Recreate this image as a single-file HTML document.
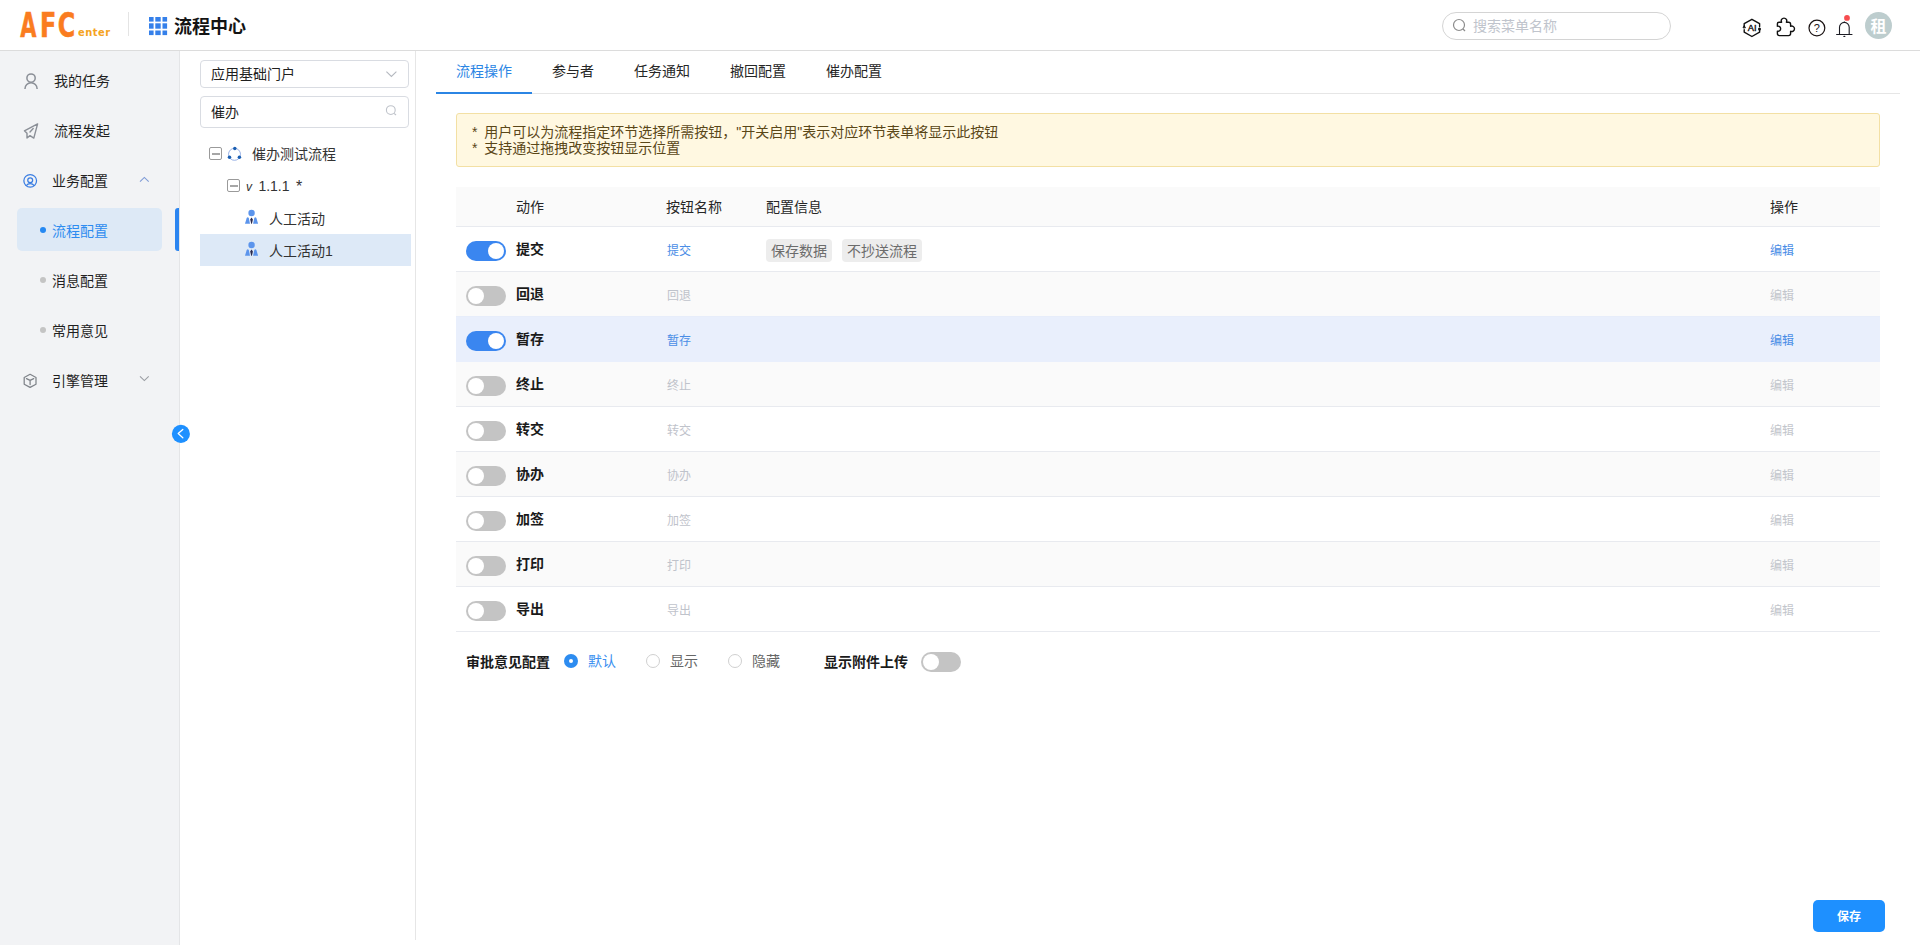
<!DOCTYPE html>
<html lang="zh-CN">
<head>
<meta charset="utf-8">
<title>流程中心</title>
<style>
*{box-sizing:border-box;margin:0;padding:0}
html,body{width:1920px;height:945px;overflow:hidden;background:#fff}
body{font-family:"Liberation Sans","Noto Sans CJK SC",sans-serif;font-size:14px;color:#1f1f1f;position:relative}
.abs{position:absolute}
.t{position:absolute;white-space:nowrap;line-height:20px;height:20px}
/* header */
#hdr{position:absolute;left:0;top:0;width:1920px;height:51px;background:#fff;border-bottom:1px solid #dcdcdc}
#logo{position:absolute;left:20px;top:5px;height:40px;line-height:40px;font-family:"DejaVu Sans","Liberation Sans",sans-serif;font-weight:bold;font-size:34px;color:#fa7c20;transform:scaleX(0.7);transform-origin:0 50%;letter-spacing:2.2px;-webkit-text-stroke:0.6px #fa7c20}
#logo2{position:absolute;left:78px;top:26px;font-family:"DejaVu Sans","Liberation Sans",sans-serif;font-weight:bold;font-size:11px;line-height:14px;color:#f5a322;letter-spacing:0.55px;transform:scaleX(0.9);transform-origin:0 50%}
#hdiv{position:absolute;left:128px;top:12px;width:1px;height:24px;background:#e4e4e4}
#title{position:absolute;left:174px;top:14px;font-size:18px;line-height:26px;font-weight:bold;color:#141414}
#search{position:absolute;left:1442px;top:12px;width:229px;height:28px;border:1px solid #d4d4d4;border-radius:14px;background:#fff}
#search span{position:absolute;left:30px;top:3px;font-size:14px;line-height:20px;color:#c0c4cc}
#avatar{position:absolute;left:1865px;top:12px;width:27px;height:27px;border-radius:50%;background:#bdcdce;color:#fff;font-size:16px;font-weight:bold;text-align:center;line-height:30px}
/* sidebar */
#side{position:absolute;left:0;top:51px;width:180px;height:894px;background:#f2f3f5;border-right:1px solid #e4e5e7}
.mi{position:absolute;left:54px;font-size:14px;line-height:20px;color:#1f1f1f;white-space:nowrap}
#act{position:absolute;left:17px;top:208px;width:145px;height:43px;border-radius:5px;background:#dde9f6}
#bar{position:absolute;left:175px;top:208px;width:4px;height:43px;background:#2b85f0;border-radius:3px 0 0 3px}
.dot{position:absolute;width:6px;height:6px;border-radius:50%;background:#c4c4c4}
/* tree panel */
#tree{position:absolute;left:180px;top:51px;width:236px;height:889px;background:#fff;border-right:1px solid #e6e6e6}
.inp{position:absolute;left:200px;width:209px;border:1px solid #d9dce2;border-radius:4px;background:#fff}
.inp span{position:absolute;left:10px;font-size:14px;line-height:20px;color:#1f1f1f}
.tn{position:absolute;font-size:14px;line-height:20px;color:#333;white-space:nowrap}
.box{position:absolute;width:13px;height:13px;border:1px solid #9a9a9a;border-radius:2px;background:#fff}
.box:after{content:"";position:absolute;left:1.5px;top:5px;width:8px;height:1.6px;background:#a6a6a6}
#tsel{position:absolute;left:200px;top:234px;width:211px;height:32px;background:#dde9f7}
/* main */
.tab{position:absolute;top:61px;font-size:14px;line-height:20px;color:#262626;white-space:nowrap}
#tabline{position:absolute;left:436px;top:93px;width:1464px;height:1px;background:#e6e6e6}
#tabink{position:absolute;left:436px;top:92px;width:96px;height:2px;background:#2b85e4}
#notice{position:absolute;left:456px;top:113px;width:1424px;height:54px;background:#fff8e1;border:1px solid #f3e0a4;border-radius:3px;font-size:14px;line-height:16px;color:#5a4718;padding:10px 0 0 15px;white-space:nowrap;word-spacing:3px}
#th{position:absolute;left:456px;top:187px;width:1424px;height:40px;background:#fafafa;border-bottom:1px solid #e8eaef}
.th{position:absolute;top:197px;font-size:14px;line-height:20px;color:#262626;white-space:nowrap}
.row{position:absolute;left:456px;width:1424px;height:45px;border-bottom:1px solid #e8eaef;background:#fff}
.row.alt{background:#fafafa}
.row.hl{background:#e9effc;border-bottom-color:#e9effc;box-shadow:0 -1px 0 #e7edfa}
.row b{position:absolute;left:60px;top:12px;font-size:14px;line-height:20px;color:#1a1a1a;font-weight:bold;white-space:nowrap}
.row i{position:absolute;left:211px;top:15px;font-style:normal;font-size:12px;line-height:18px;color:#bfc3cb;white-space:nowrap}
.row i.on{color:#4a8de6}
.row u{position:absolute;left:1314px;top:15px;text-decoration:none;font-size:12px;line-height:18px;color:#c3c6cc;white-space:nowrap}
.row u.on{color:#4a8de6}
.sw{position:absolute;left:10px;top:14px;width:40px;height:20px;border-radius:10px;background:#c4c4c4}
.sw:after{content:"";position:absolute;left:2px;top:2px;width:16px;height:16px;border-radius:50%;background:#fff}
.sw.on{background:#3a86f0}
.sw.on:after{left:22px}
.tag{position:absolute;top:12px;height:23px;border-radius:4px;background:#ededed;color:#6b6b6b;font-size:14px;line-height:25px;padding:0 5px;white-space:nowrap;overflow:hidden}
.radio{position:absolute;top:654px;width:14px;height:14px;border-radius:50%;border:1px solid #d0d0d0;background:#fff}
.radio.on{border:none;background:#2d8cf0}
.radio.on:after{content:"";position:absolute;left:5px;top:5px;width:4px;height:4px;border-radius:50%;background:#fff}
#save{position:absolute;left:1813px;top:900px;width:72px;height:32px;border-radius:5px;background:#1e90ff;color:#fff;font-size:12px;line-height:35px;overflow:hidden;text-align:center;font-weight:bold}
</style>
</head>
<body>
<!-- HEADER -->
<div id="hdr">
  <div id="logo"><span style="display:inline-block;transform:scaleX(0.88);transform-origin:15% 50%">A</span>FC</div>
  <div id="logo2">enter</div>
  <div id="hdiv"></div>
  <svg class="abs" style="left:149px;top:17px" width="19" height="19" viewBox="0 0 19 19"><g fill="#3580ea"><rect x="0" y="0" width="4.6" height="4.6"/><rect x="6.3" y="0" width="5.4" height="4.6"/><rect x="13.5" y="0" width="4.6" height="4.6"/><rect x="0" y="6.3" width="4.6" height="5.4"/><rect x="6.3" y="6.3" width="5.4" height="5.4"/><rect x="13.5" y="6.3" width="4.6" height="5.4"/><rect x="0" y="13.5" width="4.6" height="4.6"/><rect x="6.3" y="13.5" width="5.4" height="4.6"/><rect x="13.5" y="13.5" width="4.6" height="4.6"/></g></svg>
  <div id="title">流程中心</div>
  <div id="search">
    <svg class="abs" style="left:9px;top:5px" width="16" height="16" viewBox="0 0 16 16"><circle cx="7" cy="7" r="5.5" fill="none" stroke="#8c8c8c" stroke-width="1.2"/><path d="M11 11l2 2" stroke="#8c8c8c" stroke-width="1.2" fill="none"/></svg>
    <span>搜索菜单名称</span>
  </div>
  <svg class="abs" style="left:1740px;top:16px" width="24" height="24" viewBox="1740 16 24 24" fill="none" stroke="#111" stroke-width="1.4" stroke-linejoin="round" stroke-linecap="round">
    <path d="M1744.2 26.2V23.7L1751.9 19.3L1759.6 23.7V26.6"/>
    <path d="M1759.6 30.2V32.2L1751.9 36.5L1744.2 32.2V29.8"/>
    <path d="M1743.2 27.5L1744.2 25.7L1745.2 27.5Z" fill="#111" stroke-width="1"/>
    <circle cx="1759.5" cy="29.1" r="1.5" fill="#111" stroke="none"/>
    <text x="1752.1" y="31.3" font-family="Liberation Sans, sans-serif" font-size="9.3" text-anchor="middle" fill="#111" stroke="#111" stroke-width="0.4">AI</text>
  </svg>
  <svg class="abs" style="left:1774px;top:14px" width="24" height="24" viewBox="1774 14 24 24" fill="none" stroke="#111" stroke-width="1.4" stroke-linejoin="round" stroke-linecap="round">
    <path d="M1779 22.2H1781.6A2.75 2.75 0 1 1 1786.4 22.2H1788.6Q1790.6 22.2 1790.6 24.2V26.3A2.75 2.75 0 1 1 1790.6 31.3V33.6Q1790.6 35.6 1788.6 35.6H1779.4Q1777.4 35.6 1777.4 33.6V31.1A2.55 2.55 0 1 0 1777.4 26.2V23.8Q1777.4 22.2 1779 22.2Z"/>
  </svg>
  <svg class="abs" style="left:1806px;top:17px" width="22" height="22" viewBox="1806 17 22 22">
    <circle cx="1816.9" cy="28.05" r="7.9" fill="none" stroke="#1a1212" stroke-width="1.2"/>
    <text x="1816.9" y="32" font-family="Liberation Sans, sans-serif" font-size="11" text-anchor="middle" fill="#1a1212">?</text>
  </svg>
  <svg class="abs" style="left:1834px;top:12px" width="22" height="28" viewBox="1834 12 22 28">
    <path d="M1836.6 34.5H1852M1839.5 34.5V27.2A4.85 4.85 0 0 1 1849.2 27.2V34.5" fill="none" stroke="#1c1c24" stroke-width="1.1" stroke-linecap="round"/>
    <circle cx="1844.35" cy="22.3" r="0.8" fill="#1c1c24"/>
    <ellipse cx="1844.35" cy="36.4" rx="1.1" ry="0.7" fill="#1c1c24"/>
    <circle cx="1847" cy="17.9" r="2.9" fill="#f74c4f"/>
  </svg>
  <div id="avatar">租</div>
</div>

<!-- SIDEBAR -->
<div id="side"></div>
<div id="act"></div>
<div id="bar"></div>
<div class="mi" style="top:71px">我的任务</div>
<div class="mi" style="top:121px">流程发起</div>
<div class="mi" style="top:171px;left:52px">业务配置</div>
<div class="mi" style="top:221px;left:52px;color:#2d8cf0">流程配置</div>
<div class="mi" style="top:271px;left:52px">消息配置</div>
<div class="mi" style="top:321px;left:52px">常用意见</div>
<div class="mi" style="top:371px;left:52px">引擎管理</div>
<div class="dot" style="left:40px;top:227px;background:#2589f2"></div>
<div class="dot" style="left:40px;top:277px"></div>
<div class="dot" style="left:40px;top:327px"></div>

<svg class="abs" style="left:20px;top:70px" width="24" height="24" viewBox="20 70 24 24" fill="none" stroke="#8b8f97" stroke-width="1.5">
  <circle cx="31.05" cy="78.05" r="4.15"/><path d="M24.95 88.9A6.1 6.1 0 0 1 37.15 88.9"/>
</svg>
<svg class="abs" style="left:20px;top:120px" width="24" height="24" viewBox="20 120 24 24" fill="none" stroke="#8b8f97" stroke-width="1.4" stroke-linejoin="round" stroke-linecap="round">
  <path d="M37.6 123.9L24.4 130.8L27 133.3V138L30 135.6L33.8 138.1Z"/><path d="M30 131.9L33.2 128.6"/>
</svg>
<svg class="abs" style="left:20px;top:170px" width="24" height="24" viewBox="20 170 24 24" fill="none" stroke="#3a7de2" stroke-width="1.25">
  <circle cx="30.2" cy="180.85" r="6.35"/><circle cx="30.2" cy="180.2" r="2.45"/><path d="M26.3 185.7A4.6 4.6 0 0 1 34.1 185.7"/>
</svg>
<svg class="abs" style="left:20px;top:370px" width="24" height="24" viewBox="20 370 24 24" fill="none" stroke="#7f8389" stroke-width="1.25" stroke-linejoin="round" stroke-linecap="round">
  <path d="M30.1 374.3L36 377.5V384.2L30.1 387.4L24.2 384.2V377.5Z"/><path d="M26.5 378.6L30.1 380.4L33.7 378.6M30.1 380.4V384.6"/>
</svg>
<svg class="abs" style="left:138px;top:172px" width="14" height="14" viewBox="138 172 14 14" fill="none" stroke="#7f9bd6" stroke-width="1.1"><path d="M140 181.6L144.35 177.4L148.7 181.6"/></svg>
<svg class="abs" style="left:138px;top:372px" width="14" height="14" viewBox="138 372 14 14" fill="none" stroke="#9a9da3" stroke-width="1.1"><path d="M140 376.4L144.35 380.6L148.7 376.4"/></svg>
<svg class="abs" style="left:170px;top:422px;z-index:5" width="22" height="24" viewBox="170 422 22 24"><circle cx="180.9" cy="433.9" r="9.05" fill="#1e90ff"/><path d="M182.8 429.4L178.2 433.6L182.8 437.7" fill="none" stroke="#fff" stroke-width="1.3" stroke-linecap="round" stroke-linejoin="round"/></svg>

<!-- TREE PANEL -->
<div id="tree"></div>
<div class="inp" style="top:60px;height:28px"><span style="top:3px">应用基础门户</span></div>
<div class="inp" style="top:96px;height:32px"><span style="top:5px">催办</span></div>
<svg class="abs" style="left:384px;top:66px" width="16" height="16" viewBox="384 66 16 16" fill="none" stroke="#b4b8bf" stroke-width="1.1"><path d="M386.4 71.6L391.4 76.5L396.4 71.6"/></svg>
<svg class="abs" style="left:384px;top:103px" width="16" height="16" viewBox="384 103 16 16" fill="none" stroke="#bfc3ca" stroke-width="1.1"><circle cx="390.8" cy="110.1" r="4.4"/><path d="M394 113.3L396 115"/></svg>
<div id="tsel"></div>
<div class="box" style="left:209px;top:147px"></div>
<div class="box" style="left:227px;top:179px"></div>
<svg class="abs" style="left:226px;top:146px" width="18" height="16" viewBox="226 146 18 16"><circle cx="234.5" cy="154.3" r="6" fill="none" stroke="#8fa9e2" stroke-width="0.9"/><g fill="#1b5fb2"><circle cx="234.8" cy="148.6" r="1.75"/><circle cx="229.5" cy="157.3" r="1.75"/><circle cx="239.4" cy="157.3" r="1.75"/></g></svg>
<svg class="abs" style="left:243px;top:208px" width="18" height="18" viewBox="243 208 18 18"><circle cx="251.55" cy="213.05" r="3.2" fill="#5b94ec"/><path d="M245 223.8L246.7 218Q247.7 216.6 248.8 218L250 223.8Z" fill="#5b94ec"/><path d="M258.1 223.8L256.4 218Q255.4 216.6 254.3 218L253.1 223.8Z" fill="#5b94ec"/><path d="M251.55 217.6L252.9 219.5L251.9 223.8H251.2L250.2 219.5Z" fill="#2b2a4c"/></svg>
<svg class="abs" style="left:243px;top:240px" width="18" height="18" viewBox="243 208 18 18"><circle cx="251.55" cy="213.05" r="3.2" fill="#5b94ec"/><path d="M245 223.8L246.7 218Q247.7 216.6 248.8 218L250 223.8Z" fill="#5b94ec"/><path d="M258.1 223.8L256.4 218Q255.4 216.6 254.3 218L253.1 223.8Z" fill="#5b94ec"/><path d="M251.55 217.6L252.9 219.5L251.9 223.8H251.2L250.2 219.5Z" fill="#2b2a4c"/></svg>
<div class="tn" style="left:252px;top:144px">催办测试流程</div>
<div class="tn" style="left:246px;top:176px"><em style="font-size:12px;margin-right:2.5px">v</em> 1.1.1<span style="margin-left:2px;font-size:16px;position:relative;top:1px"> *</span></div>
<div class="tn" style="left:269px;top:209px">人工活动</div>
<div class="tn" style="left:269px;top:241px">人工活动1</div>

<!-- MAIN -->
<div id="tabline"></div>
<div id="tabink"></div>
<div class="tab" style="left:456px;color:#2b85e4">流程操作</div>
<div class="tab" style="left:552px">参与者</div>
<div class="tab" style="left:634px">任务通知</div>
<div class="tab" style="left:730px">撤回配置</div>
<div class="tab" style="left:826px">催办配置</div>

<div id="notice">* 用户可以为流程指定环节选择所需按钮，"开关启用"表示对应环节表单将显示此按钮<br>* 支持通过拖拽改变按钮显示位置</div>

<div id="th"></div>
<div class="th" style="left:516px">动作</div>
<div class="th" style="left:666px">按钮名称</div>
<div class="th" style="left:766px">配置信息</div>
<div class="th" style="left:1770px">操作</div>

<div class="row" style="top:227px"><div class="sw on"></div><b>提交</b><i class="on">提交</i><div class="tag" style="left:310px">保存数据</div><div class="tag" style="left:386px">不抄送流程</div><u class="on">编辑</u></div>
<div class="row alt" style="top:272px"><div class="sw"></div><b>回退</b><i>回退</i><u>编辑</u></div>
<div class="row hl" style="top:317px"><div class="sw on"></div><b>暂存</b><i class="on">暂存</i><u class="on">编辑</u></div>
<div class="row alt" style="top:362px"><div class="sw"></div><b>终止</b><i>终止</i><u>编辑</u></div>
<div class="row" style="top:407px"><div class="sw"></div><b>转交</b><i>转交</i><u>编辑</u></div>
<div class="row alt" style="top:452px"><div class="sw"></div><b>协办</b><i>协办</i><u>编辑</u></div>
<div class="row" style="top:497px"><div class="sw"></div><b>加签</b><i>加签</i><u>编辑</u></div>
<div class="row alt" style="top:542px"><div class="sw"></div><b>打印</b><i>打印</i><u>编辑</u></div>
<div class="row" style="top:587px"><div class="sw"></div><b>导出</b><i>导出</i><u>编辑</u></div>

<div class="t" style="left:466px;top:652px;font-weight:bold;color:#1a1a1a">审批意见配置</div>
<div class="radio on" style="left:564px"></div>
<div class="t" style="left:588px;top:651px;color:#3a8ff0">默认</div>
<div class="radio" style="left:646px"></div>
<div class="t" style="left:670px;top:651px;color:#666">显示</div>
<div class="radio" style="left:728px"></div>
<div class="t" style="left:752px;top:651px;color:#666">隐藏</div>
<div class="t" style="left:824px;top:652px;font-weight:bold;color:#1a1a1a">显示附件上传</div>
<div class="sw" style="left:921px;top:652px"></div>

<div id="save">保存</div>
</body>
</html>
